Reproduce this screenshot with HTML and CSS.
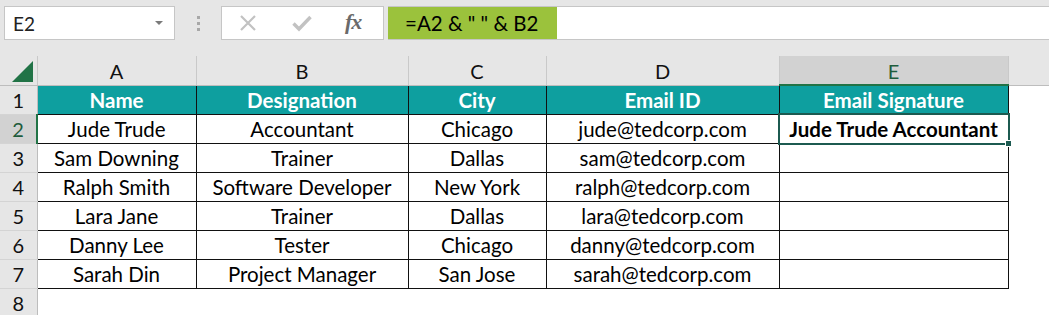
FILE: index.html
```html
<html>
  <head>
    <meta charset="UTF-8">
    <link rel="stylesheet" href="styles.css">
  </head>
  <body>

    <div class="bar">
      <div class="namebox">
        <span>E2</span>
        <span class="drop"></span>
      </div>
      <div class="grip"><i></i><i></i><i></i></div>
      <div class="tools">
        <svg class="tool" width="18" height="18" viewBox="0 0 18 18">
          <path d="M2 2 L16 16 M16 2 L2 16" stroke="#c2c2c2" stroke-width="2.2" fill="none"/>
        </svg>
        <svg class="tool" width="20" height="18" viewBox="0 0 20 18">
          <path d="M1.5 9.5 L7 15 L18.5 3" stroke="#c2c2c2" stroke-width="3.4" fill="none"/>
        </svg>
        <span class="fx">fx</span>
      </div>
      <div class="formula">
        <span class="expr">=A2 &amp; " " &amp; B2</span>
      </div>
    </div>

    <table class="sheet">
      <colgroup>
        <col style="width:37px">
        <col style="width:159px">
        <col style="width:212px">
        <col style="width:138px">
        <col style="width:233px">
        <col style="width:229px">
        <col>
      </colgroup>
      <tr class="colhead">
        <th class="corner"><span class="tri"></span></th>
        <th>A</th>
        <th>B</th>
        <th>C</th>
        <th>D</th>
        <th class="sel">E</th>
        <th class="blank"></th>
      </tr>
      <tr class="hrow">
        <th class="rn">1</th>
        <td>Name</td>
        <td>Designation</td>
        <td>City</td>
        <td>Email ID</td>
        <td>Email Signature</td>
        <td class="out"></td>
      </tr>
      <tr>
        <th class="rn sel">2</th>
        <td>Jude Trude</td>
        <td>Accountant</td>
        <td>Chicago</td>
        <td>jude@tedcorp.com</td>
        <td class="active"><span>Jude Trude Accountant</span><i class="handle"></i></td>
        <td class="out"></td>
      </tr>
      <tr>
        <th class="rn">3</th>
        <td>Sam Downing</td>
        <td>Trainer</td>
        <td>Dallas</td>
        <td>sam@tedcorp.com</td>
        <td></td>
        <td class="out"></td>
      </tr>
      <tr>
        <th class="rn">4</th>
        <td>Ralph Smith</td>
        <td>Software Developer</td>
        <td>New York</td>
        <td>ralph@tedcorp.com</td>
        <td></td>
        <td class="out"></td>
      </tr>
      <tr>
        <th class="rn">5</th>
        <td>Lara Jane</td>
        <td>Trainer</td>
        <td>Dallas</td>
        <td>lara@tedcorp.com</td>
        <td></td>
        <td class="out"></td>
      </tr>
      <tr>
        <th class="rn">6</th>
        <td>Danny Lee</td>
        <td>Tester</td>
        <td>Chicago</td>
        <td>danny@tedcorp.com</td>
        <td></td>
        <td class="out"></td>
      </tr>
      <tr>
        <th class="rn">7</th>
        <td>Sarah Din</td>
        <td>Project Manager</td>
        <td>San Jose</td>
        <td>sarah@tedcorp.com</td>
        <td></td>
        <td class="out"></td>
      </tr>
      <tr class="empty">
        <th class="rn">8</th>
        <td class="out"></td>
        <td class="out"></td>
        <td class="out"></td>
        <td class="out"></td>
        <td class="out"></td>
        <td class="out"></td>
      </tr>
    </table>

  </body>
</html>
```

FILE: styles.css
```css
body {
  margin: 0;
  background: #ffffff;
  font-family: Lato, "Open Sans", sans-serif;
  overflow: hidden;
}

.bar {
  display: flex;
  align-items: center;
  height: 56px;
  padding: 0 0 0 4px;
  background: #e6e6e6;
  box-sizing: border-box;
}

.namebox {
  display: flex;
  align-items: center;
  justify-content: space-between;
  width: 171px;
  height: 34px;
  margin-bottom: 10px;
  padding: 0 11px 0 8px;
  box-sizing: border-box;
  background: #ffffff;
  border: 1px solid #c6c6c6;
  font-size: 19px;
  color: #222;
}

.drop {
  width: 0;
  height: 0;
  border-left: 4px solid transparent;
  border-right: 4px solid transparent;
  border-top: 4px solid #7a7a7a;
}

.grip {
  display: flex;
  flex-direction: column;
  gap: 3px;
  width: 46px;
  align-items: center;
  margin-bottom: 10px;
}

.grip i {
  width: 3px;
  height: 3px;
  background: #a8a8a8;
}

.tools {
  display: flex;
  align-items: center;
  width: 163px;
  height: 34px;
  margin-bottom: 10px;
  box-sizing: border-box;
  background: #ffffff;
  border: 1px solid #c6c6c6;
  padding-left: 17px;
}

.tool {
  margin-right: 35px;
}

.tools svg:nth-child(2) {
  margin-right: 33px;
}

.fx {
  font-family: "Liberation Serif", serif;
  font-style: italic;
  font-weight: bold;
  font-size: 22px;
  color: #6a6a6a;
  letter-spacing: -1px;
  margin-top: -3px;
}

.formula {
  display: flex;
  align-items: center;
  flex: 1;
  height: 34px;
  margin: 0 0 10px 4px;
  background: #ffffff;
  border-top: 1px solid #c6c6c6;
  border-bottom: 1px solid #c6c6c6;
  box-sizing: border-box;
}

.expr {
  display: flex;
  align-items: center;
  height: 100%;
  width: 169px;
  padding-left: 17px;
  box-sizing: border-box;
  background: #9bc23c;
  font-size: 20.5px;
  color: #000;
}

.sheet {
  border-collapse: collapse;
  table-layout: fixed;
  width: 1049px;
  font-size: 20.5px;
  color: #000;
}

.sheet tr {
  height: 29px;
}

.sheet th,
.sheet td {
  padding: 1px 0 0 0;
  height: 29px;
  line-height: 26px;
  text-align: center;
  white-space: nowrap;
  overflow: hidden;
}

.colhead th {
  background: #e6e6e6;
  font-weight: normal;
  font-size: 20px;
  color: #111;
  border-left: 1px solid #c9c9c9;
  border-bottom: 1px solid #bdbdbd;
}

.colhead th.corner {
  position: relative;
  border-left: none;
}

.tri {
  position: absolute;
  right: 4px;
  bottom: 3px;
  width: 0;
  height: 0;
  border-left: 21px solid transparent;
  border-bottom: 21px solid #217346;
}

.colhead th.sel {
  background: #d2d2d2;
  color: #1e5c3c;
  border-bottom: 2px solid #217346;
  border-right: 1px solid #c9c9c9;
}

.colhead th.blank {
  border-left: 1px solid #c9c9c9;
}

th.rn {
  background: #e6e6e6;
  font-weight: normal;
  font-size: 20px;
  color: #111;
  border-bottom: 1px solid #d4d4d4;
  border-right: 1px solid #bdbdbd;
}

th.rn.sel {
  background: #d2d2d2;
  color: #1e5c3c;
  border-right: 2px solid #217346;
}

.sheet td {
  border: 1px solid #111;
}

.hrow td {
  background: #0e9f9f;
  color: #ffffff;
  font-weight: bold;
}

.sheet td.out {
  border: none;
  background: #ffffff;
}

.empty th.rn {
  border-bottom: none;
}

.sheet td.active {
  position: relative;
  overflow: visible;
  font-weight: bold;
}

.active::after {
  content: "";
  position: absolute;
  left: -2px;
  top: -2px;
  right: -2px;
  bottom: -2px;
  border: 2px solid #1c5a50;
}

.handle {
  position: absolute;
  right: -4px;
  bottom: -4px;
  width: 5px;
  height: 5px;
  background: #1c5a50;
  border: 1px solid #ffffff;
  z-index: 1;
}
```
